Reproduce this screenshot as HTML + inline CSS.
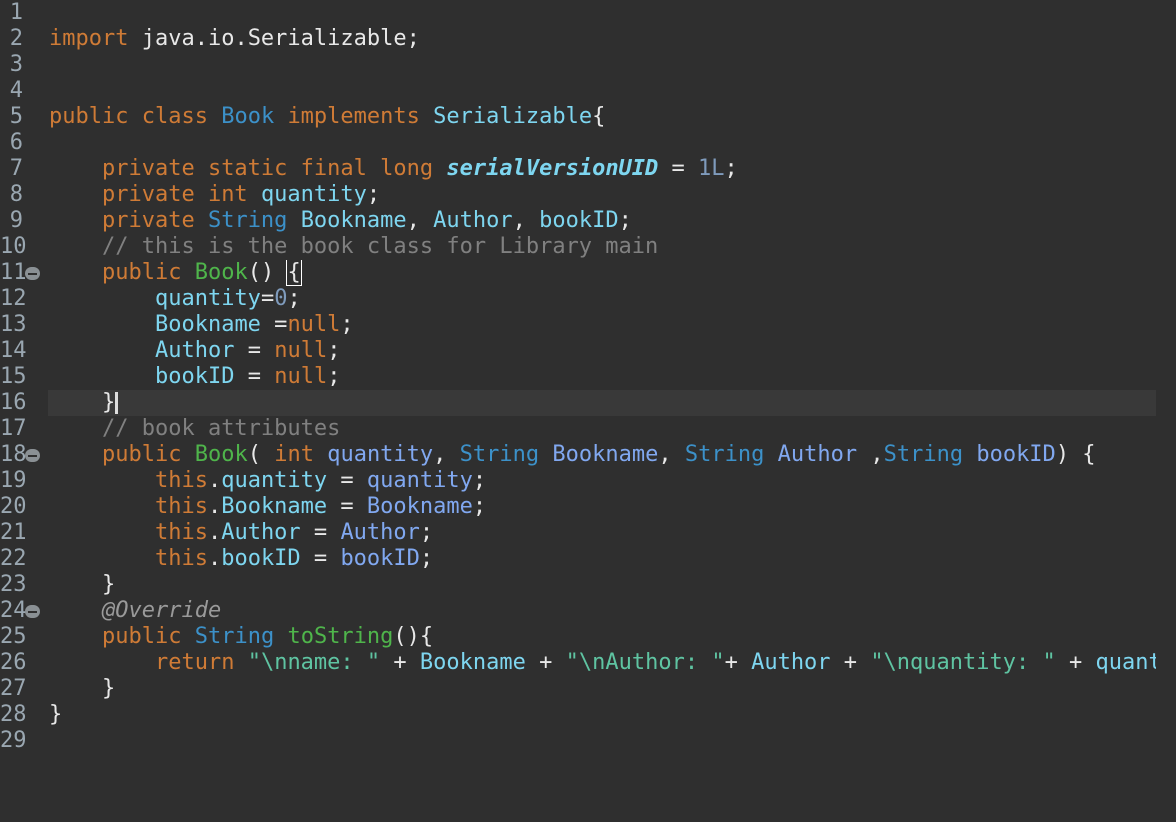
<!DOCTYPE html>
<html><head><style>
body{margin:0;width:1176px;height:822px;background:#2f2f2f;overflow:hidden;font-family:"DejaVu Sans Mono","Liberation Mono",monospace;font-size:22px;color:#e8e8e8}
.wrap{position:absolute;top:0px;left:0;width:1176px}
.l{height:26px;line-height:26px;white-space:pre;position:relative}
.n{position:absolute;left:0;width:23px;text-align:right;color:#9aa7b1;overflow:visible}
.c{position:absolute;left:49px;width:1107px;overflow:hidden}
.hl{position:absolute;left:48px;width:1108px;height:26px;background:#393939}
.k{color:#cf7b36}.f{color:#7ed6f0}.t{color:#3c91c9}.p{color:#81a8f0}.m{color:#4fb54b}.cm{color:#808080}.num{color:#7f9bbc}.s{color:#5fc4a2}.a{color:#9a9a9a;font-style:italic}
.fold{position:absolute;left:25px;top:7px;width:15px;height:13px;border-radius:7px;background:#8a9094}
.fold:after{content:"";position:absolute;left:3px;top:6px;width:9px;height:2px;background:#2f2f2f}
.cur{display:inline-block;width:3px;height:22px;background:#ddd;vertical-align:-5px}
.box{outline:1.5px solid #fff}
</style></head><body><div class="wrap">
<div class="l"><span class="n">1</span></div>
<div class="l"><span class="n">2</span><span class="c"><span class="k">import</span> java.io.Serializable;</span></div>
<div class="l"><span class="n">3</span></div>
<div class="l"><span class="n">4</span></div>
<div class="l"><span class="n">5</span><span class="c"><span class="k">public class</span> <span class="t">Book</span> <span class="k">implements</span> <span class="f">Serializable</span>{</span></div>
<div class="l"><span class="n">6</span></div>
<div class="l"><span class="n">7</span><span class="c">    <span class="k">private static final long</span> <b class="f" style="font-style:italic">serialVersionUID</b> = <span class="num">1L</span>;</span></div>
<div class="l"><span class="n">8</span><span class="c">    <span class="k">private int</span> <span class="f">quantity</span>;</span></div>
<div class="l"><span class="n">9</span><span class="c">    <span class="k">private</span> <span class="t">String</span> <span class="f">Bookname</span>, <span class="f">Author</span>, <span class="f">bookID</span>;</span></div>
<div class="l"><span class="n">10</span><span class="c">    <span class="cm">// this is the book class for Library main</span></span></div>
<div class="l"><span class="n">11</span><span class="fold"></span><span class="c">    <span class="k">public</span> <span class="m">Book</span>() <span class="box">{</span></span></div>
<div class="l"><span class="n">12</span><span class="c">        <span class="f">quantity</span>=<span class="num">0</span>;</span></div>
<div class="l"><span class="n">13</span><span class="c">        <span class="f">Bookname</span> =<span class="k">null</span>;</span></div>
<div class="l"><span class="n">14</span><span class="c">        <span class="f">Author</span> = <span class="k">null</span>;</span></div>
<div class="l"><span class="n">15</span><span class="c">        <span class="f">bookID</span> = <span class="k">null</span>;</span></div>
<div class="l"><span class="hl"></span><span class="n">16</span><span class="c">    }<span class="cur"></span></span></div>
<div class="l"><span class="n">17</span><span class="c">    <span class="cm">// book attributes</span></span></div>
<div class="l"><span class="n">18</span><span class="fold"></span><span class="c">    <span class="k">public</span> <span class="m">Book</span>( <span class="k">int</span> <span class="p">quantity</span>, <span class="t">String</span> <span class="p">Bookname</span>, <span class="t">String</span> <span class="p">Author</span> ,<span class="t">String</span> <span class="p">bookID</span>) {</span></div>
<div class="l"><span class="n">19</span><span class="c">        <span class="k">this</span>.<span class="f">quantity</span> = <span class="p">quantity</span>;</span></div>
<div class="l"><span class="n">20</span><span class="c">        <span class="k">this</span>.<span class="f">Bookname</span> = <span class="p">Bookname</span>;</span></div>
<div class="l"><span class="n">21</span><span class="c">        <span class="k">this</span>.<span class="f">Author</span> = <span class="p">Author</span>;</span></div>
<div class="l"><span class="n">22</span><span class="c">        <span class="k">this</span>.<span class="f">bookID</span> = <span class="p">bookID</span>;</span></div>
<div class="l"><span class="n">23</span><span class="c">    }</span></div>
<div class="l"><span class="n">24</span><span class="fold"></span><span class="c">    <span class="a">@Override</span></span></div>
<div class="l"><span class="n">25</span><span class="c">    <span class="k">public</span> <span class="t">String</span> <span class="m">toString</span>(){</span></div>
<div class="l"><span class="n">26</span><span class="c">        <span class="k">return</span> <span class="s">"\nname: "</span> + <span class="f">Bookname</span> + <span class="s">"\nAuthor: "</span>+ <span class="f">Author</span> + <span class="s">"\nquantity: "</span> + <span class="f">quantity</span></span></div>
<div class="l"><span class="n">27</span><span class="c">    }</span></div>
<div class="l"><span class="n">28</span><span class="c">}</span></div>
<div class="l"><span class="n">29</span></div>
</div></body></html>
